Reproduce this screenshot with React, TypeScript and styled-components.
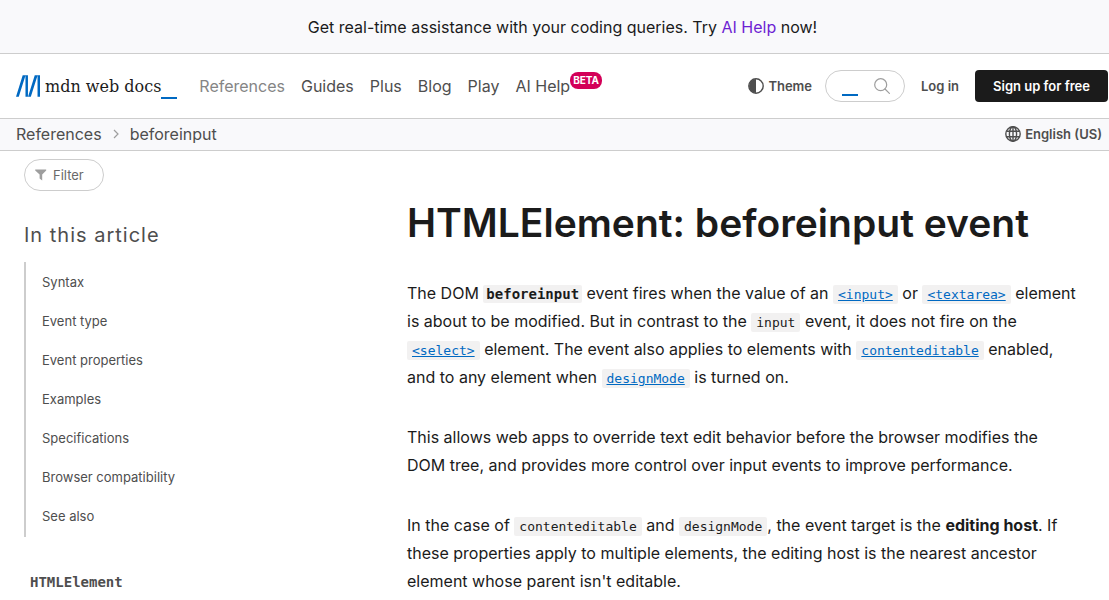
import React from "react";
import styled, { createGlobalStyle } from "styled-components";

const GlobalStyle = createGlobalStyle`
  *, *::before, *::after { box-sizing: border-box; }
  body {
    margin: 0;
    background: #fff;
    color: #1b1b1b;
    font: 400 16px/28px Inter, "Liberation Sans", sans-serif;
  }
  a { color: inherit; text-decoration: none; }
  button, input { font: inherit; color: inherit; }
  ul, ol { list-style: none; margin: 0; padding: 0; }
`;

const Banner = styled.aside`
  display: flex;
  align-items: center;
  justify-content: center;
  min-height: 54px;
  padding-left: 16px;
  background: #f9f9fb;
  border-bottom: 1px solid #cdcdcd;

  p { margin: 0; }
  a { color: #6e1fd3; }
`;

const Header = styled.header`
  display: flex;
  align-items: center;
  min-height: 65px;
  padding: 0 1px 0 16px;
  border-bottom: 1px solid #cdcdcd;
`;

const Logo = styled.a`
  display: flex;
  align-items: center;
  margin-right: 22px;
  color: #1b1b1b;
  font: 16px/24px "DejaVu Serif", serif;
  white-space: nowrap;

  svg { display: block; margin-right: 5px; }
`;

const LogoText = styled.span`
  padding-top: 2px;
`;

const Cursor = styled.span`
  align-self: flex-end;
  width: 16px;
  height: 2px;
  background: #0069c2;
`;

const MainNav = styled.nav`
  flex: 1;

  ul { display: flex; gap: 16px; }
`;

const NavLink = styled.a<{ $active?: boolean }>`
  display: flex;
  color: ${(p) => (p.$active ? "#858585" : "#4e4e4e")};
  white-space: nowrap;
`;

const Beta = styled.sup`
  align-self: flex-start;
  height: 17px;
  padding: 0 3px;
  border-radius: 8px;
  background: #d30058;
  color: #fff;
  font-size: 10px;
  font-weight: 700;
  line-height: 17px;
`;

const Actions = styled.div<{ $gap: number }>`
  display: flex;
  align-items: center;
  gap: ${(p) => p.$gap}px;
  color: #4e4e4e;
  font-size: 13px;
  font-weight: 600;
  white-space: nowrap;
`;

const IconButton = styled.button`
  display: flex;
  align-items: center;
  gap: 4px;
  padding: 0;
  border: 0;
  background: none;
  color: #4e4e4e;
  font-size: 13px;
  font-weight: 600;
  line-height: 20px;
  cursor: pointer;
`;

const Pill = styled.label`
  display: flex;
  align-items: center;
  width: 80px;
  height: 32px;
  border: 1px solid #cdcdcd;
  border-radius: 16px;
  background: #fff;
`;

const SearchPill = styled(Pill)`
  padding: 0 14px 0 16px;

  span { margin-bottom: 5px; }
  svg { flex: none; }
`;

const FilterPill = styled(Pill)`
  padding: 0 10px;
  gap: 6px;
  color: #696969;
  font-size: 13px;
`;

const PillInput = styled.input`
  flex: 1;
  min-width: 0;
  width: 0;
  padding: 0;
  border: 0;
  outline: 0;
  background: none;

  &::placeholder { color: #696969; opacity: 1; }
`;

const SignUp = styled.a`
  padding: 0 18px;
  border-radius: 4px;
  background: #1b1b1b;
  color: #fff;
  line-height: 32px;
`;

const SubBar = styled.div`
  display: flex;
  align-items: center;
  justify-content: space-between;
  min-height: 32px;
  padding: 0 7px 2px 16px;
  background: #f9f9fb;
  border-bottom: 1px solid #cdcdcd;
  color: #4e4e4e;

  ol { display: flex; align-items: center; }
  li { display: flex; align-items: center; }
  svg { display: block; }
  li > svg { margin: 0 11px; }
`;

const Page = styled.div`
  display: grid;
  grid-template-columns: 383px minmax(0, 1fr);
  padding: 0 30px 0 24px;
`;

const Sidebar = styled.aside`
  padding-top: 8px;
  color: #4e4e4e;
`;

const SidebarTitle = styled.h2`
  margin: 29px 0 12px;
  font-size: 20px;
  font-weight: 400;
  line-height: 30px;
  letter-spacing: 1px;
`;

const Toc = styled.ul`
  padding: 1px 0;
  border-left: 2px solid #cdcdcd;

  a {
    display: block;
    padding-left: 16px;
    font-size: 13px;
    line-height: 39px;
  }
`;

const RelatedLink = styled.a`
  display: block;
  margin: 30px 0 0 6px;
  font-weight: 700;
  line-height: 28px;

  code { font: 700 14px "DejaVu Sans Mono", monospace; }
`;

const Article = styled.main`
  padding-top: 48px;

  p { margin: 0 0 32px; }
`;

const Title = styled.h1`
  margin: 0 0 32px;
  font-size: 39px;
  font-weight: 600;
  line-height: 48px;
`;

const Code = styled.code`
  padding: 2px 5px;
  border-radius: 2px;
  background: #f2f1f1;
  font: 13px/16px "DejaVu Sans Mono", monospace;
`;

const BoldCode = styled(Code)`
  padding: 1px 3px;
  font-size: 14px;
  font-weight: 700;
`;

const DocLink = styled.a`
  color: #0069c2;

  code { text-decoration: underline; }
`;

const CodeLink = ({ children }: { children: string }) => (
  <DocLink href="#">
    <Code>{children}</Code>
  </DocLink>
);

const LogoMark = () => (
  <svg width="24" height="22" viewBox="0 0 101.2 91.4" fill="#0069c2" aria-hidden="true">
    <path d="M40.3 0 11.7 91.4H0L28.2 0zM50.4 0v91.4H40V0zM91.1 0 62.5 91.4H50.8L79.1 0zM101.2 0v91.4H90.8V0z" />
  </svg>
);

const ThemeIcon = () => (
  <svg width="16" height="16" viewBox="0 0 16 16" aria-hidden="true">
    <circle cx="8" cy="8" r="7.2" fill="none" stroke="#4e4e4e" strokeWidth="1.4" />
    <path d="M8 1a7 7 0 0 0 0 14z" fill="#4e4e4e" />
  </svg>
);

const SearchIcon = () => (
  <svg width="16" height="16" viewBox="0 0 16 16" fill="none" stroke="#9e9e9e" strokeWidth="1.2" strokeLinecap="round" aria-hidden="true">
    <circle cx="6.7" cy="6.7" r="6" />
    <path d="m11 11 4.4 4.4" />
  </svg>
);

const GlobeIcon = () => (
  <svg width="16" height="16" viewBox="0 0 16 16" fill="none" stroke="#4e4e4e" strokeWidth="1.4" aria-hidden="true">
    <circle cx="8" cy="8" r="7.2" />
    <ellipse cx="8" cy="8" rx="3.6" ry="7.2" />
    <path d="M8 .8v14.4M1.6 5.3h12.8M1.6 10.7h12.8" />
  </svg>
);

const ChevronIcon = () => (
  <svg width="6" height="10" viewBox="0 0 6 10" fill="none" stroke="#9e9e9e" strokeWidth="1.2" aria-hidden="true">
    <path d="m1 1 4 4-4 4" />
  </svg>
);

const FunnelIcon = () => (
  <svg width="12" height="12" viewBox="0 0 12 12" fill="#9e9e9e" aria-hidden="true">
    <path d="M.2.6h11v1L7.2 5.6v5.8L4.6 9.6v-4L.2 1.6z" />
  </svg>
);

const navItems = ["References", "Guides", "Plus", "Blog", "Play", "AI Help"];
const tocItems = [
  "Syntax",
  "Event type",
  "Event properties",
  "Examples",
  "Specifications",
  "Browser compatibility",
  "See also",
];

export default function App() {
  return (
    <>
      <GlobalStyle />
      <Banner>
        <p>
          Get real-time assistance with your coding queries. Try <a href="#">AI Help</a> now!
        </p>
      </Banner>
      <Header>
        <Logo href="#">
          <LogoMark />
          <LogoText>mdn web docs</LogoText>
          <Cursor />
        </Logo>
        <MainNav aria-label="Main">
          <ul>
            {navItems.map((item) => (
              <li key={item}>
                <NavLink href="#" $active={item === "References"}>
                  {item}
                  {item === "AI Help" && <Beta>BETA</Beta>}
                </NavLink>
              </li>
            ))}
          </ul>
        </MainNav>
        <Actions $gap={16}>
          <Actions $gap={13}>
            <IconButton type="button">
              <ThemeIcon />
              Theme
            </IconButton>
            <SearchPill>
              <Cursor />
              <PillInput type="search" aria-label="Search MDN" />
              <SearchIcon />
            </SearchPill>
          </Actions>
          <a href="#">Log in</a>
          <SignUp href="#">Sign up for free</SignUp>
        </Actions>
      </Header>
      <SubBar>
        <nav aria-label="Breadcrumb">
          <ol>
            <li>
              <a href="#">References</a>
              <ChevronIcon />
            </li>
            <li>
              <a href="#">beforeinput</a>
            </li>
          </ol>
        </nav>
        <IconButton type="button">
          <GlobeIcon />
          English (US)
        </IconButton>
      </SubBar>
      <Page>
        <Sidebar>
          <FilterPill>
            <FunnelIcon />
            <PillInput type="text" placeholder="Filter" aria-label="Filter sidebar" />
          </FilterPill>
          <SidebarTitle>In this article</SidebarTitle>
          <Toc>
            {tocItems.map((item) => (
              <li key={item}>
                <a href="#">{item}</a>
              </li>
            ))}
          </Toc>
          <RelatedLink href="#">
            <code>HTMLElement</code>
          </RelatedLink>
        </Sidebar>
        <Article>
          <Title>HTMLElement: beforeinput event</Title>
          <p>
            The DOM <BoldCode>beforeinput</BoldCode> event fires when the value of an{" "}
            <CodeLink>{"<input>"}</CodeLink> or <CodeLink>{"<textarea>"}</CodeLink> element is
            about to be modified. But in contrast to the <Code>input</Code> event, it does not
            fire on the <CodeLink>{"<select>"}</CodeLink> element. The event also applies to
            elements with <CodeLink>contenteditable</CodeLink> enabled, and to any element when{" "}
            <CodeLink>designMode</CodeLink> is turned on.
          </p>
          <p>
            This allows web apps to override text edit behavior before the browser modifies the
            DOM tree, and provides more control over input events to improve performance.
          </p>
          <p>
            In the case of <Code>contenteditable</Code> and <Code>designMode</Code>, the event
            target is the <strong>editing host</strong>. If these properties apply to multiple
            elements, the editing host is the nearest ancestor element whose parent isn't
            editable.
          </p>
        </Article>
      </Page>
    </>
  );
}
